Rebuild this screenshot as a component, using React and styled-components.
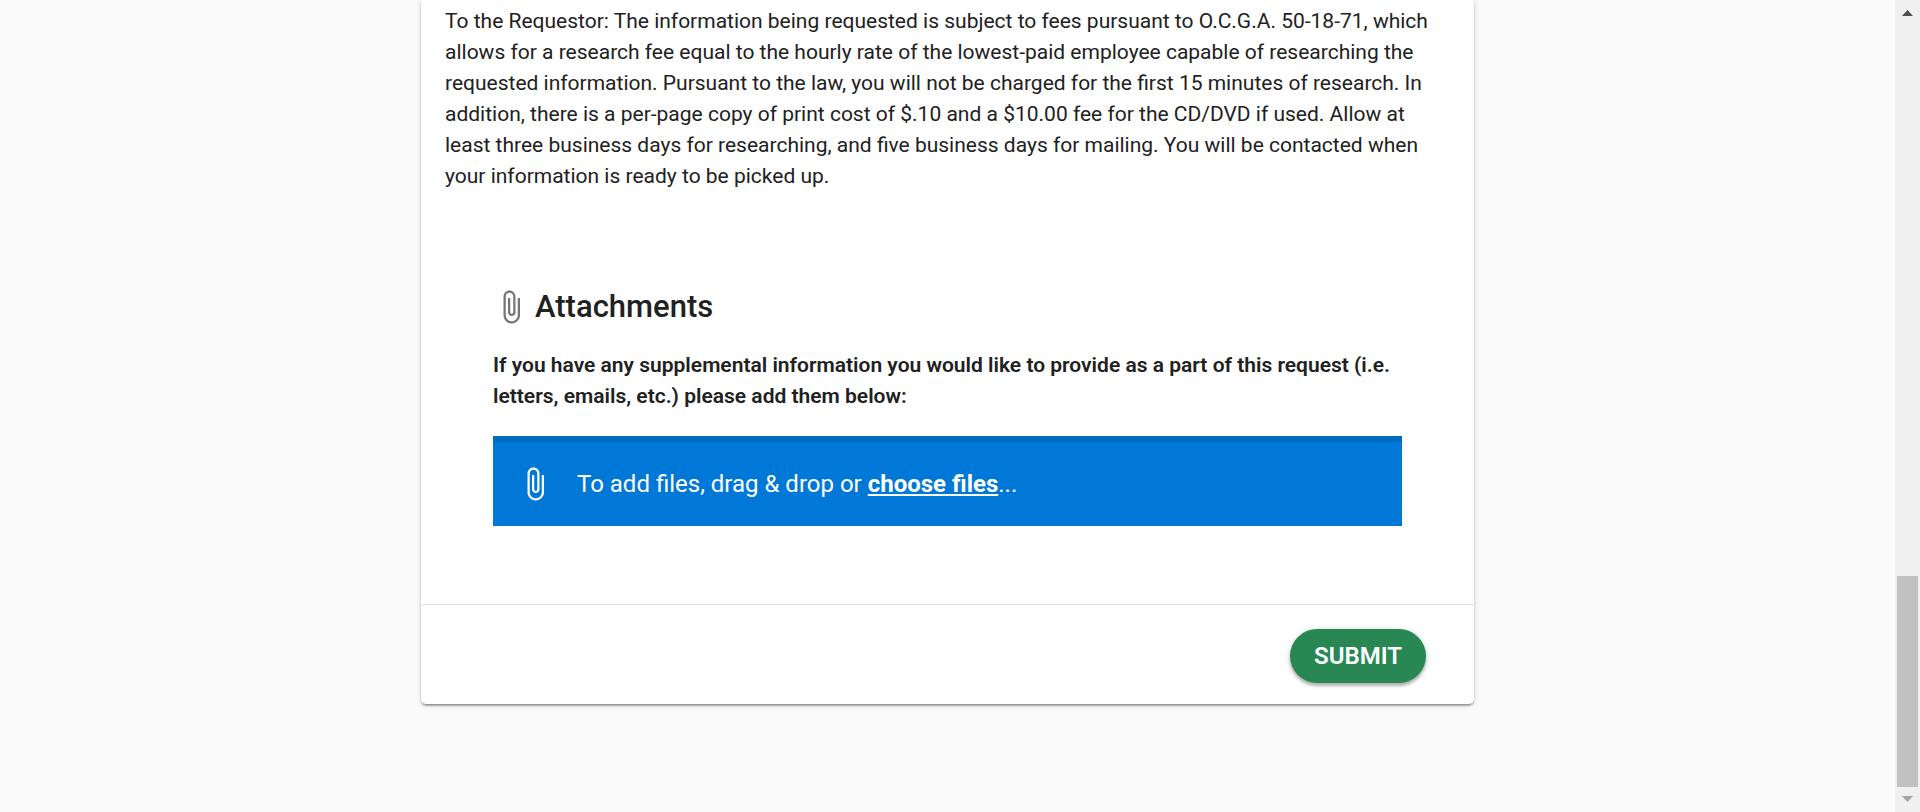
import React from "react";
import styled, { createGlobalStyle } from "styled-components";

const GlobalStyle = createGlobalStyle`
  *, *::before, *::after { box-sizing: border-box; }
  body {
    margin: 0;
    background: #fafafa;
    color: #212121;
    font-family: Roboto, "Liberation Sans", sans-serif;
    font-size: 21px;
    line-height: 31px;
  }
`;

const Page = styled.div`
  display: grid;
  grid-template-columns: minmax(0, 1fr) 25px;
  min-height: 100vh;
`;

const Main = styled.main`
  padding: 0 24px 96px;
`;

const Card = styled.form`
  max-width: 1053px;
  margin: 0 auto;
  background: #fff;
  border-radius: 0 0 5px 5px;
  box-shadow: 0 4px 2px -3px rgba(0, 0, 0, 0.2), 0 2px 2px rgba(0, 0, 0, 0.24),
    0 1px 6px rgba(0, 0, 0, 0.12);
`;

const Notice = styled.p`
  margin: 0;
  padding: 6px 24px 0;
`;

const Attachments = styled.section`
  padding: 97px 72px 78px;
`;

const Heading = styled.h2`
  display: flex;
  align-items: center;
  gap: 6px;
  margin: 0;
  font-size: 31px;
  line-height: 36px;
  font-weight: 500;
`;

const ClipIcon = styled.svg`
  flex: none;
  width: 36px;
  height: 36px;
  fill: ${({ $color }) => $color};
`;

const Hint = styled.p`
  margin: 25px 0 24px;
  font-weight: 600;
`;

const DropZone = styled.div`
  display: flex;
  align-items: center;
  gap: 24px;
  min-height: 90px;
  padding: 6px 24px 0;
  background: linear-gradient(#006abf 6px, #0078d7 6px);
  color: #fff;
  font-size: 24px;
`;

const FileLabel = styled.label`
  font-weight: 700;
  text-decoration: underline;
  cursor: pointer;
`;

const FileInput = styled.input`
  position: absolute;
  width: 1px;
  height: 1px;
  opacity: 0;
`;

const Actions = styled.footer`
  display: flex;
  justify-content: flex-end;
  padding: 24px 48px 21px;
  border-top: 1px solid #e0e0e0;
`;

const SubmitButton = styled.button`
  height: 54px;
  padding: 0 24px;
  border: 0;
  border-radius: 27px;
  background: #288753;
  color: #fff;
  font-family: inherit;
  font-size: 24px;
  font-weight: 600;
  text-transform: uppercase;
  cursor: pointer;
  box-shadow: 0 3px 3px rgba(0, 0, 0, 0.24), 0 1px 6px rgba(0, 0, 0, 0.16);
`;

const Scrollbar = styled.div`
  display: flex;
  flex-direction: column;
  background: #f0f0f0;
`;

const ScrollArrow = styled.svg`
  flex: none;
  width: 25px;
  height: 25px;
  fill: ${({ $color }) => $color};
`;

const ScrollTrack = styled.div`
  flex: 1;
  display: grid;
  grid-template-rows: 551fr 211fr;
  padding: 0 2px;
`;

const ScrollThumb = styled.div`
  grid-row: 2;
  background: #c1c1c1;
`;

function Paperclip({ color }) {
  return (
    <ClipIcon viewBox="0 0 24 24" $color={color} aria-hidden="true">
      <path d="M16.5 6v11.5c0 2.21-1.79 4-4 4s-4-1.79-4-4V5c0-1.38 1.12-2.5 2.5-2.5s2.5 1.12 2.5 2.5v10.5c0 .55-.45 1-1 1s-1-.45-1-1V6H10v9.5c0 1.38 1.12 2.5 2.5 2.5s2.5-1.12 2.5-2.5V5c0-2.21-1.79-4-4-4S7 2.79 7 5v12.5c0 3.04 2.46 5.5 5.5 5.5s5.5-2.46 5.5-5.5V6h-1.5z" />
    </ClipIcon>
  );
}

export default function App() {
  return (
    <>
      <GlobalStyle />
      <Page>
        <Main>
          <Card onSubmit={(event) => event.preventDefault()}>
            <Notice>
              To the Requestor: The information being requested is subject to
              fees pursuant to O.C.G.A. 50-18-71, which allows for a research
              fee equal to the hourly rate of the lowest-paid employee capable
              of researching the requested information. Pursuant to the law, you
              will not be charged for the first 15 minutes of research. In
              addition, there is a per-page copy of print cost of $.10 and a
              $10.00 fee for the CD/DVD if used. Allow at least three business
              days for researching, and five business days for mailing. You will
              be contacted when your information is ready to be picked up.
            </Notice>
            <Attachments>
              <Heading>
                <Paperclip color="#757575" />
                Attachments
              </Heading>
              <Hint>
                If you have any supplemental information you would like to
                provide as a part of this request (i.e. letters, emails, etc.)
                please add them below:
              </Hint>
              <DropZone>
                <Paperclip color="#fff" />
                <span>
                  To add files, drag &amp; drop or{" "}
                  <FileLabel htmlFor="files">choose files</FileLabel>...
                  <FileInput id="files" type="file" multiple />
                </span>
              </DropZone>
            </Attachments>
            <Actions>
              <SubmitButton type="submit">Submit</SubmitButton>
            </Actions>
          </Card>
        </Main>
        <Scrollbar aria-hidden="true">
          <ScrollArrow viewBox="0 0 25 25" $color="#505050">
            <path d="M7 16L12.500 10L18 16Z" />
          </ScrollArrow>
          <ScrollTrack>
            <ScrollThumb />
          </ScrollTrack>
          <ScrollArrow viewBox="0 0 25 25" $color="#a3a3a3">
            <path d="M7 9H18L12.500 15Z" />
          </ScrollArrow>
        </Scrollbar>
      </Page>
    </>
  );
}
